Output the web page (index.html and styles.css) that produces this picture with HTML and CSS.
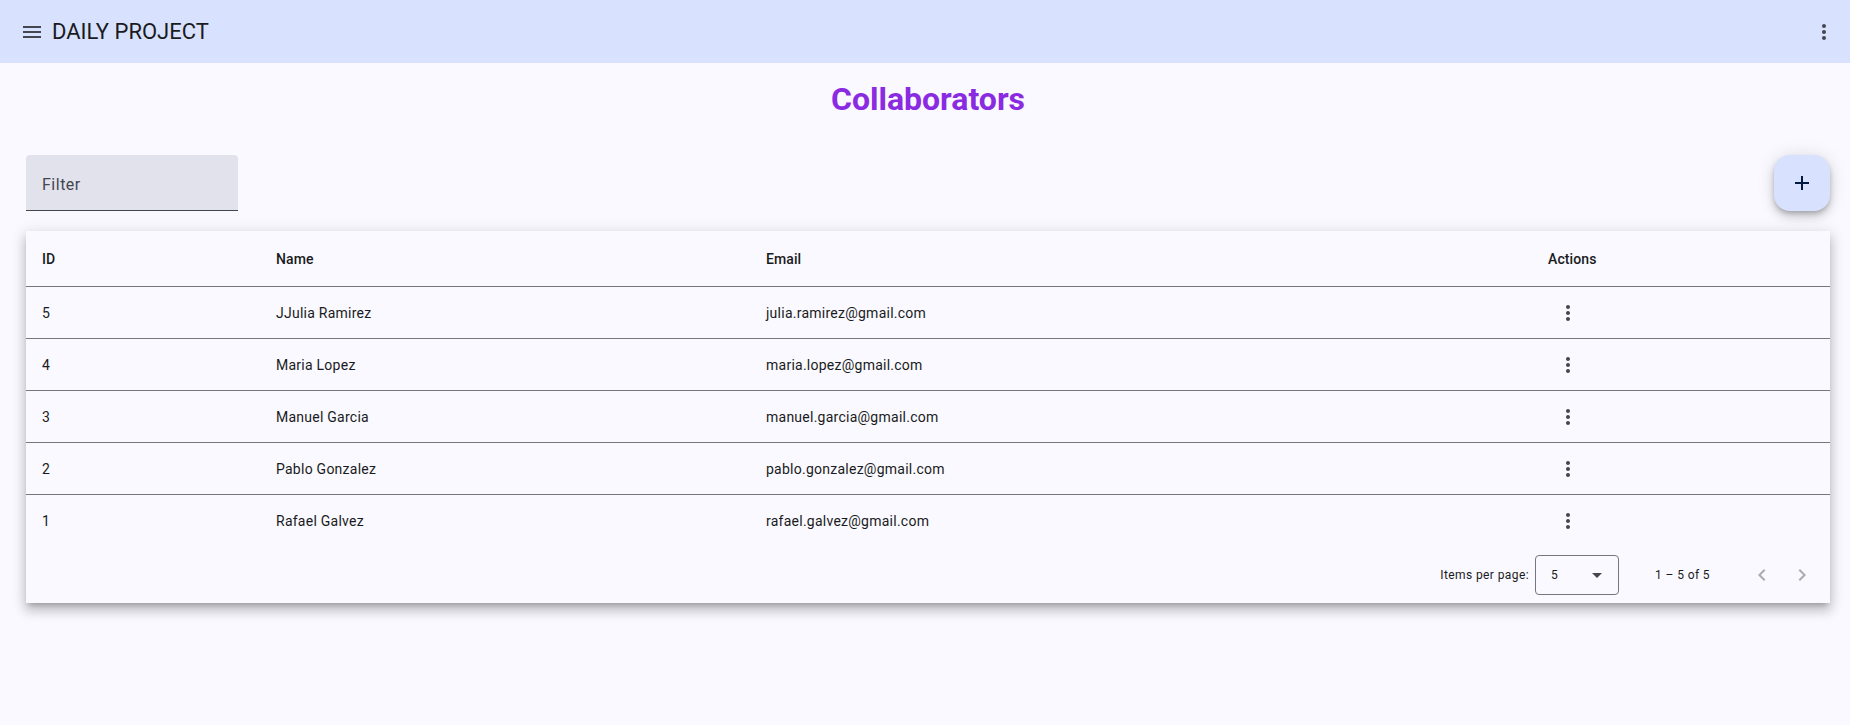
FILE: index.html
```html
<!DOCTYPE html>
<html>
<head>
<meta charset="utf-8">
<link rel="stylesheet" href="styles.css">
</head>
<body>
<header class="toolbar">
  <div class="toolbar-left">
    <button class="icon-btn menu-btn" aria-label="menu">
      <svg width="24" height="24" viewBox="0 0 24 24"><path d="M3 18h18v-2H3v2zm0-5h18v-2H3v2zm0-7v2h18V6H3z" fill="#44474f"/></svg>
    </button>
    <span class="toolbar-title">DAILY PROJECT</span>
  </div>
  <button class="icon-btn more-btn" aria-label="more">
    <svg width="24" height="24" viewBox="0 0 24 24"><path d="M12 8c1.1 0 2-.9 2-2s-.9-2-2-2-2 .9-2 2 .9 2 2 2zm0 2c-1.1 0-2 .9-2 2s.9 2 2 2 2-.9 2-2-.9-2-2-2zm0 6c-1.1 0-2 .9-2 2s.9 2 2 2 2-.9 2-2-.9-2-2-2z" fill="#44474f"/></svg>
  </button>
</header>

<main class="content">
  <h1 class="page-title">Collaborators</h1>

  <div class="controls">
    <div class="filter-field"><span class="filter-label">Filter</span></div>
    <button class="fab" aria-label="add">
      <svg width="24" height="24" viewBox="0 0 24 24"><path d="M19 13h-6v6h-2v-6H5v-2h6V5h2v6h6v2z" fill="#001a41"/></svg>
    </button>
  </div>

  <section class="table-card">
    <div class="row header-row">
      <div class="cell c-id">ID</div>
      <div class="cell c-name">Name</div>
      <div class="cell c-email">Email</div>
      <div class="cell c-actions">Actions</div>
    </div>
    <div class="row">
      <div class="cell c-id">5</div>
      <div class="cell c-name">JJulia Ramirez</div>
      <div class="cell c-email">julia.ramirez@gmail.com</div>
      <div class="cell c-actions"><span class="kebab"><svg width="24" height="24" viewBox="0 0 24 24"><path d="M12 8c1.1 0 2-.9 2-2s-.9-2-2-2-2 .9-2 2 .9 2 2 2zm0 2c-1.1 0-2 .9-2 2s.9 2 2 2 2-.9 2-2-.9-2-2-2zm0 6c-1.1 0-2 .9-2 2s.9 2 2 2 2-.9 2-2-.9-2-2-2z" fill="#44474f"/></svg></span></div>
    </div>
    <div class="row">
      <div class="cell c-id">4</div>
      <div class="cell c-name">Maria Lopez</div>
      <div class="cell c-email">maria.lopez@gmail.com</div>
      <div class="cell c-actions"><span class="kebab"><svg width="24" height="24" viewBox="0 0 24 24"><path d="M12 8c1.1 0 2-.9 2-2s-.9-2-2-2-2 .9-2 2 .9 2 2 2zm0 2c-1.1 0-2 .9-2 2s.9 2 2 2 2-.9 2-2-.9-2-2-2zm0 6c-1.1 0-2 .9-2 2s.9 2 2 2 2-.9 2-2-.9-2-2-2z" fill="#44474f"/></svg></span></div>
    </div>
    <div class="row">
      <div class="cell c-id">3</div>
      <div class="cell c-name">Manuel Garcia</div>
      <div class="cell c-email">manuel.garcia@gmail.com</div>
      <div class="cell c-actions"><span class="kebab"><svg width="24" height="24" viewBox="0 0 24 24"><path d="M12 8c1.1 0 2-.9 2-2s-.9-2-2-2-2 .9-2 2 .9 2 2 2zm0 2c-1.1 0-2 .9-2 2s.9 2 2 2 2-.9 2-2-.9-2-2-2zm0 6c-1.1 0-2 .9-2 2s.9 2 2 2 2-.9 2-2-.9-2-2-2z" fill="#44474f"/></svg></span></div>
    </div>
    <div class="row">
      <div class="cell c-id">2</div>
      <div class="cell c-name">Pablo Gonzalez</div>
      <div class="cell c-email">pablo.gonzalez@gmail.com</div>
      <div class="cell c-actions"><span class="kebab"><svg width="24" height="24" viewBox="0 0 24 24"><path d="M12 8c1.1 0 2-.9 2-2s-.9-2-2-2-2 .9-2 2 .9 2 2 2zm0 2c-1.1 0-2 .9-2 2s.9 2 2 2 2-.9 2-2-.9-2-2-2zm0 6c-1.1 0-2 .9-2 2s.9 2 2 2 2-.9 2-2-.9-2-2-2z" fill="#44474f"/></svg></span></div>
    </div>
    <div class="row last-row">
      <div class="cell c-id">1</div>
      <div class="cell c-name">Rafael Galvez</div>
      <div class="cell c-email">rafael.galvez@gmail.com</div>
      <div class="cell c-actions"><span class="kebab"><svg width="24" height="24" viewBox="0 0 24 24"><path d="M12 8c1.1 0 2-.9 2-2s-.9-2-2-2-2 .9-2 2 .9 2 2 2zm0 2c-1.1 0-2 .9-2 2s.9 2 2 2 2-.9 2-2-.9-2-2-2zm0 6c-1.1 0-2 .9-2 2s.9 2 2 2 2-.9 2-2-.9-2-2-2z" fill="#44474f"/></svg></span></div>
    </div>
    <div class="paginator">
      <span class="pg-label">Items per page:</span>
      <div class="pg-select">
        <span>5</span>
        <svg width="10" height="5" viewBox="0 0 10 5"><path d="M0 0l5 5 5-5z" fill="#44474f"/></svg>
      </div>
      <span class="pg-range">1 – 5 of 5</span>
      <div class="pg-nav">
        <span class="pg-btn"><svg width="24" height="24" viewBox="0 0 24 24"><path d="M15.41 7.41L14 6l-6 6 6 6 1.41-1.41L10.83 12z" fill="#a9abb3"/></svg></span>
        <span class="pg-btn"><svg width="24" height="24" viewBox="0 0 24 24"><path d="M10 6L8.59 7.41 13.17 12l-4.58 4.59L10 18l6-6z" fill="#a9abb3"/></svg></span>
      </div>
    </div>
  </section>
</main>
</body>
</html>
```

FILE: styles.css
```css
* { box-sizing: border-box; }
html, body { margin: 0; padding: 0; }
body {
  background: #f9f9ff;
  font-family: Roboto, "Liberation Sans", sans-serif;
  color: #1a1b21;
  width: 1850px;
  height: 725px;
  overflow: hidden;
}
button { font: inherit; border: 0; background: none; padding: 0; cursor: pointer; }

.toolbar {
  height: 63px;
  background: #d8e2ff;
  display: flex;
  align-items: center;
  justify-content: space-between;
  padding: 0 14px 0 20px;
}
.toolbar-left { display: flex; align-items: center; }
.icon-btn { display: flex; width: 24px; height: 24px; }
.menu-btn { margin-right: 8px; }
.toolbar-title {
  font-size: 22px;
  font-weight: 400;
  color: #1a1b21;
  letter-spacing: 0;
}

.content { padding: 0 20px 0 26px; }

.page-title {
  margin: 0;
  height: 92px;
  padding-top: 9px;
  text-align: center;
  font-size: 32px;
  font-weight: 700;
  color: #8a2be2;
  line-height: 54px;
}

.controls {
  display: flex;
  justify-content: space-between;
  align-items: flex-start;
  height: 76px;
}
.filter-field {
  width: 212px;
  height: 56px;
  background: #e1e2ec;
  border-radius: 4px 4px 0 0;
  border-bottom: 1px solid #44474f;
  display: flex;
  align-items: center;
  padding: 3px 0 0 16px;
}
.filter-label {
  font-size: 16px;
  color: #44474f;
  letter-spacing: 0.5px;
}
.fab {
  width: 56px;
  height: 56px;
  border-radius: 16px;
  background: #d8e2ff;
  display: flex;
  align-items: center;
  justify-content: center;
  box-shadow: 0 3px 5px -1px rgba(0,0,0,.2), 0 6px 10px 0 rgba(0,0,0,.14), 0 1px 18px 0 rgba(0,0,0,.12);
}

.table-card {
  background: #f9f9ff;
  box-shadow: 0 5px 5px -3px rgba(0,0,0,.2), 0 8px 10px 1px rgba(0,0,0,.14), 0 3px 14px 2px rgba(0,0,0,.12);
}
.row {
  display: flex;
  align-items: center;
  height: 52px;
  border-bottom: 1px solid #74777f;
  font-size: 14px;
  letter-spacing: 0.25px;
  color: #1a1b21;
}
.header-row { height: 56px; font-weight: 500; letter-spacing: 0.1px; }
.last-row { border-bottom: 0; }
.cell { padding-left: 16px; }
.c-id { width: 234px; }
.c-name { width: 490px; }
.c-email { width: 782px; }
.c-actions { flex: 1; }
.kebab { display: flex; width: 40px; height: 40px; align-items: center; justify-content: center; }

.paginator {
  height: 56px;
  display: flex;
  align-items: center;
  justify-content: flex-end;
  padding-right: 8px;
  font-size: 12px;
  letter-spacing: 0.4px;
  color: #1a1b21;
}
.pg-label { margin-right: 6px; }
.pg-select {
  width: 84px;
  height: 40px;
  border: 1px solid #74777f;
  border-radius: 4px;
  display: flex;
  align-items: center;
  justify-content: space-between;
  padding: 0 16px 0 15px;
  margin-right: 36px;
}
.pg-range { margin-right: 32px; }
.pg-nav { display: flex; }
.pg-btn { width: 40px; height: 40px; display: flex; align-items: center; justify-content: center; }
```
